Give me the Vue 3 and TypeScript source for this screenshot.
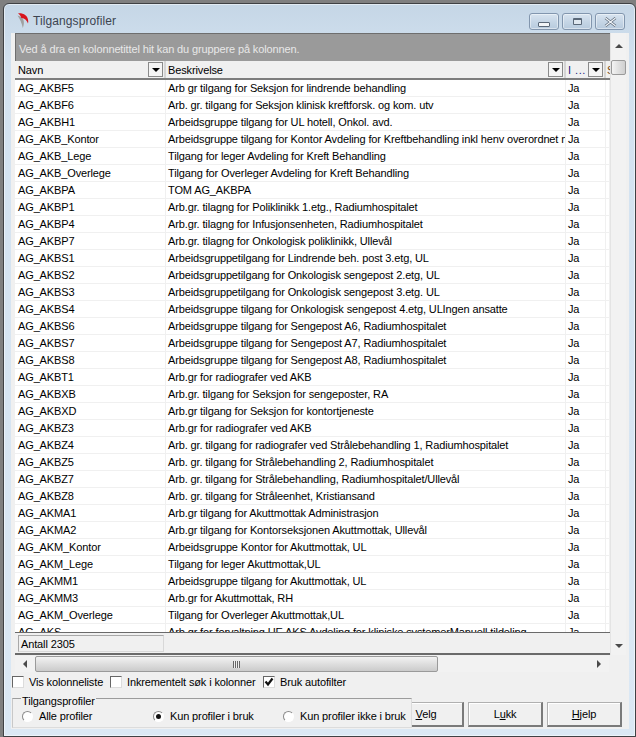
<script setup lang="ts">
const rows: [string, string][] = [
  ["AG_AKBF5", "Arb gr tilgang for Seksjon for lindrende behandling"],
  ["AG_AKBF6", "Arb. gr. tilgang for Seksjon klinisk kreftforsk. og kom. utv"],
  ["AG_AKBH1", "Arbeidsgruppe tilgang for UL hotell, Onkol. avd."],
  ["AG_AKB_Kontor", "Arbeidsgruppe tilgang for Kontor Avdeling for Kreftbehandling inkl henv overordnet n"],
  ["AG_AKB_Lege", "Tilgang for leger Avdeling for Kreft Behandling"],
  ["AG_AKB_Overlege", "Tilgang for Overleger Avdeling for Kreft Behandling"],
  ["AG_AKBPA", "TOM AG_AKBPA"],
  ["AG_AKBP1", "Arb.gr. tilagng for Poliklinikk 1.etg., Radiumhospitalet"],
  ["AG_AKBP4", "Arb.gr. tilagng for Infusjonsenheten, Radiumhospitalet"],
  ["AG_AKBP7", "Arb.gr. tilagng for Onkologisk poliklinikk, Ullevål"],
  ["AG_AKBS1", "Arbeidsgruppetilgang for Lindrende beh. post 3.etg, UL"],
  ["AG_AKBS2", "Arbeidsgruppetilgang for Onkologisk sengepost 2.etg, UL"],
  ["AG_AKBS3", "Arbeidsgruppetilgang for Onkologisk sengepost 3.etg. UL"],
  ["AG_AKBS4", "Arbeidsgruppe tilgang for Onkologisk sengepost 4.etg, ULIngen ansatte"],
  ["AG_AKBS6", "Arbeidsgruppe tilgang for Sengepost A6, Radiumhospitalet"],
  ["AG_AKBS7", "Arbeidsgruppe tilgang for Sengepost A7, Radiumhospitalet"],
  ["AG_AKBS8", "Arbeidsgruppe tilgang for Sengepost A8, Radiumhospitalet"],
  ["AG_AKBT1", "Arb.gr for radiografer ved AKB"],
  ["AG_AKBXB", "Arb.gr. tilgang for Seksjon for sengeposter, RA"],
  ["AG_AKBXD", "Arb.gr tilgang for Seksjon for kontortjeneste"],
  ["AG_AKBZ3", "Arb.gr for radiografer ved AKB"],
  ["AG_AKBZ4", "Arb. gr. tilgang for radiografer ved Strålebehandling 1, Radiumhospitalet"],
  ["AG_AKBZ5", "Arb. gr. tilgang for Strålebehandling 2, Radiumhospitalet"],
  ["AG_AKBZ7", "Arb. gr. tilgang for Strålebehandling, Radiumhospitalet/Ullevål"],
  ["AG_AKBZ8", "Arb. gr. tilgang for Stråleenhet, Kristiansand"],
  ["AG_AKMA1", "Arb.gr tilgang for Akuttmottak Administrasjon"],
  ["AG_AKMA2", "Arb.gr tilgang for Kontorseksjonen Akuttmottak, Ullevål"],
  ["AG_AKM_Kontor", "Arbeidsgruppe Kontor for Akuttmottak, UL"],
  ["AG_AKM_Lege", "Tilgang for leger Akuttmottak,UL"],
  ["AG_AKMM1", "Arbeidsgruppe tilgang for Akuttmottak, UL"],
  ["AG_AKMM3", "Arb.gr for Akuttmottak, RH"],
  ["AG_AKM_Overlege", "Tilgang for Overleger Akuttmottak,UL"],
  ["AG_AKS", "Arb.gr for forvaltning UE AKS Avdeling for kliniske systemerManuell tildeling"],
];
</script>

<template>
  <div class="desktop">
    <div class="window">
      <div class="titlebar">
        <svg class="app-icon" width="12" height="16" viewBox="0 0 12 16">
          <path d="M0.500 2.500C3.500 3 5.500 5 6.500 7C7.200 9 7 12 5.800 15C4.800 10 3 6 0.500 2.500Z" fill="#a0a0a0" />
          <path d="M1 0.300C6.500 -0.300 12.500 3 11 10.500C10 7.500 8 5.300 4.300 5C3.700 3 2.500 1.500 1 0.300Z" fill="#d8141c" />
        </svg>
        <span class="title">Tilgangsprofiler</span>
        <div class="caption-buttons">
          <div class="caption-btn"><span class="glyph-min"></span></div>
          <div class="caption-btn"><span class="glyph-max"></span></div>
          <div class="caption-btn">
            <svg width="13" height="10" viewBox="0 0 13 10">
              <path d="M1.500 1L11.500 9M11.500 1L1.500 9" stroke="#5a6878" stroke-width="2.600" fill="none" />
              <path d="M1.500 1L11.500 9M11.500 1L1.500 9" stroke="#f4f7fa" stroke-width="1.200" fill="none" />
            </svg>
          </div>
        </div>
      </div>

      <div class="client">
        <div class="grid-area">
          <div class="grid">
            <div class="group-panel">Ved å dra en kolonnetittel hit kan du gruppere på kolonnen.</div>
            <div class="head">
              <div class="hcell c1">
                <span>Navn</span>
                <span class="filter"></span>
              </div>
              <div class="hcell c2">
                <span>Beskrivelse</span>
                <span class="filter"></span>
              </div>
              <div class="hcell c3">
                <span class="i-label">I ...</span>
                <span class="filter"></span>
              </div>
              <div class="hcell c4"><span class="cut">S</span></div>
            </div>
            <div class="body">
              <div v-for="r in rows" :key="r[0]" class="row">
                <div class="cell c1">{{ r[0] }}</div>
                <div class="cell c2">{{ r[1] }}</div>
                <div class="cell c3">Ja</div>
                <div class="cell c4"></div>
              </div>
            </div>
            <div class="footer">
              <div class="count">Antall 2305</div>
            </div>
          </div>
          <div class="vscroll">
            <div class="arrow-box"><span class="arrow up"></span></div>
            <div class="vthumb"></div>
            <div class="vtrack"></div>
            <div class="arrow-box low"><span class="arrow down"></span></div>
          </div>
        </div>

        <div class="hscroll">
          <div class="harrow"><span class="arrow left"></span></div>
          <div class="hthumb"><span class="grip"></span></div>
          <div class="htrack"></div>
          <div class="harrow"><span class="arrow right"></span></div>
        </div>

        <div class="options">
          <label class="check opt1"><span class="box"></span>Vis kolonneliste</label>
          <label class="check opt2"><span class="box"></span>Inkrementelt søk i kolonner</label>
          <label class="check">
            <span class="box">
              <svg width="10" height="10" viewBox="0 0 10 10">
                <path d="M1.500 4.500L4 7.500L8.500 1.500" fill="none" stroke="#111" stroke-width="2.200" />
              </svg>
            </span>
            Bruk autofilter
          </label>
        </div>

        <div class="bottom">
          <fieldset class="profiles">
            <legend>Tilgangsprofiler</legend>
            <label class="radio r1"><span class="dot"></span>Alle profiler</label>
            <label class="radio r2"><span class="dot on"></span>Kun profiler i bruk</label>
            <label class="radio"><span class="dot"></span>Kun profiler ikke i bruk</label>
          </fieldset>
          <div class="buttons">
            <button class="btn"><u>V</u>elg</button>
            <button class="btn">L<u>u</u>kk</button>
            <button class="btn"><u>H</u>jelp</button>
          </div>
        </div>
      </div>
    </div>
  </div>
</template>

<style>
html,
body {
  margin: 0;
  background: #7f7f7f;
}
</style>

<style scoped>
.desktop {
  width: 636px;
  height: 737px;
  padding: 3px 0 0 3px;
  box-sizing: border-box;
  background: #7f7f7f;
  overflow: hidden;
  font-family: Tahoma, "Liberation Sans", Arial, sans-serif;
  font-size: 11px;
  letter-spacing: -0.13px;
  color: #000;
}

.window {
  width: 633px;
  height: 734px;
  box-sizing: border-box;
  border: 1px solid #3f4144;
  border-radius: 6px 6px 0 0;
  background: linear-gradient(#c5d6e6, #d3e2f0 60px, #dbe8f4);
  box-shadow: inset 0 0 0 1px rgba(255, 255, 255, 0.5);
  display: flex;
  flex-direction: column;
}

.titlebar {
  height: 29px;
  display: flex;
  align-items: flex-start;
  padding: 9px 10px 0 13px;
  box-sizing: border-box;
  flex: none;
}

.app-icon {
  margin: 0 4px 0 0;
}

.title {
  font-size: 12px;
  letter-spacing: 0.1px;
  color: #3c4450;
  line-height: 17px;
  flex: 1;
}

.caption-buttons {
  display: flex;
  gap: 3px;
}

.caption-btn {
  width: 30px;
  height: 17px;
  box-sizing: border-box;
  border: 1px solid #8296ae;
  border-radius: 3px;
  background: linear-gradient(#d8e4f0, #c6d6e6 50%, #b7cadd);
  box-shadow: inset 0 0 0 1px rgba(255, 255, 255, 0.45);
  display: flex;
  align-items: center;
  justify-content: center;
}

.glyph-min {
  width: 10px;
  height: 3px;
  margin-top: 5px;
  background: #f2f5f8;
  border: 1px solid #5a6878;
  border-radius: 1px;
}

.glyph-max {
  width: 7px;
  height: 4px;
  background: #dfe7ef;
  border: 1px solid #5a6878;
  border-top-width: 2px;
  border-radius: 1px;
}

.client {
  margin: 0 6px 0 7px;
  height: 696px;
  background: #f0f0f0;
  flex: none;
  display: flex;
  flex-direction: column;
  padding-left: 4px;
  box-sizing: border-box;
}

.grid-area {
  display: flex;
  height: 622px;
  padding-right: 2px;
  flex: none;
}

.grid {
  width: 595px;
  flex: none;
  display: flex;
  flex-direction: column;
  overflow: hidden;
  background: #f0f0f0;
}

.group-panel {
  height: 28px;
  flex: none;
  box-sizing: border-box;
  background: #9a9a9a;
  color: #e8e8e8;
  padding: 7px 0 0 3px;
  line-height: 16px;
  border-top: 1px solid #6e6e6e;
  border-left: 1px solid #6e6e6e;
}

.head {
  display: flex;
  flex: none;
  background: #f0f0f0;
  border-bottom: 2px solid #7d7d7d;
  box-sizing: border-box;
  height: 19px;
}

.hcell {
  display: flex;
  align-items: center;
  justify-content: space-between;
  box-sizing: border-box;
  padding: 0 1px 0 3px;
  border-right: 2px solid #d4d4d4;
  background: #f0f0f0;
  white-space: nowrap;
  overflow: hidden;
}

.c1 {
  width: 151px;
  flex: none;
}

.c2 {
  width: 400px;
  flex: none;
}

.c3 {
  width: 40px;
  flex: none;
}

.c4 {
  flex: 1;
}

.filter {
  width: 15px;
  height: 15px;
  box-sizing: border-box;
  border: 1px solid #8a8a8a;
  background: #f4f4f4;
  position: relative;
  flex: none;
}

.filter::after {
  content: "";
  position: absolute;
  left: 3px;
  top: 5px;
  border-left: 4px solid transparent;
  border-right: 4px solid transparent;
  border-top: 4px solid #000;
}

.hcell.c2,
.hcell.c3,
.cell.c2,
.cell.c3 {
  padding-left: 2px;
}

.i-label {
  color: #1c1c80;
  letter-spacing: 0.5px;
}

.hcell.c4 {
  border-right: 0;
  padding-left: 1px;
}

.cut {
  color: #7a4a10;
}

.body {
  flex: 1;
  min-height: 0;
  overflow: hidden;
  background: #fff;
}

.row {
  display: flex;
  height: 17px;
  box-sizing: border-box;
  border-bottom: 1px solid #f0f0f0;
  line-height: 16px;
  white-space: nowrap;
}

.cell {
  padding-left: 3px;
  box-sizing: border-box;
  overflow: hidden;
  border-right: 1px solid #f0f0f0;
  height: 16px;
}

.footer {
  height: 23px;
  flex: none;
  box-sizing: border-box;
  border-top: 1px solid #6a6a6a;
  border-bottom: 2px solid #6a6a6a;
  background: #f0f0f0;
  padding: 2px 0 0 3px;
}

.count {
  width: 146px;
  height: 17px;
  line-height: 16px;
  box-sizing: border-box;
  border: 1px solid #d8d8d8;
  border-top-color: #a8a8a8;
  border-left-color: #a8a8a8;
  padding-left: 2px;
}

.vscroll {
  width: 15px;
  flex: none;
  display: flex;
  flex-direction: column;
  background: #f2f2f2;
  border-left: 1px solid #e4e4e4;
}

.arrow-box {
  height: 26px;
  flex: none;
  display: flex;
  align-items: center;
  justify-content: center;
}

.arrow-box.low {
  padding-top: 8px;
  box-sizing: border-box;
}

.vthumb {
  height: 15px;
  margin-top: 1px;
  flex: none;
  box-sizing: border-box;
  border: 1px solid #9a9a9a;
  border-radius: 2px;
  background: linear-gradient(90deg, #f4f4f4, #e0e0e0 50%, #cfcfcf);
}

.vtrack {
  flex: 1;
}

.arrow {
  width: 0;
  height: 0;
  display: block;
}

.arrow.up {
  border-left: 4px solid transparent;
  border-right: 4px solid transparent;
  border-bottom: 4px solid #4a4a4a;
}

.arrow.down {
  border-left: 4px solid transparent;
  border-right: 4px solid transparent;
  border-top: 4px solid #4a4a4a;
}

.arrow.left {
  border-top: 4px solid transparent;
  border-bottom: 4px solid transparent;
  border-right: 4px solid #4a4a4a;
}

.arrow.right {
  border-top: 4px solid transparent;
  border-bottom: 4px solid transparent;
  border-left: 4px solid #4a4a4a;
}

.hscroll {
  height: 16px;
  margin-top: 1px;
  width: 594px;
  display: flex;
  background: #f2f2f2;
  flex: none;
}

.harrow {
  width: 20px;
  flex: none;
  display: flex;
  align-items: center;
  justify-content: center;
}

.hthumb {
  width: 403px;
  flex: none;
  box-sizing: border-box;
  border: 1px solid #9a9a9a;
  border-radius: 2px;
  background: linear-gradient(#f2f2f2, #dedede 50%, #cbcbcb);
  display: flex;
  align-items: center;
  justify-content: center;
}

.grip {
  width: 7px;
  height: 7px;
  background: repeating-linear-gradient(90deg, #666 0 1px, #eee 1px 2px);
}

.htrack {
  flex: 1;
}

.options {
  display: flex;
  margin-top: 2px;
  height: 16px;
  flex: none;
  align-items: center;
}

.check {
  display: flex;
  align-items: center;
  gap: 5px;
  white-space: nowrap;
}

.box {
  width: 12px;
  height: 12px;
  box-sizing: border-box;
  border: 1px solid #dcdcdc;
  border-top-color: #666;
  border-left-color: #666;
  background: #fff;
  display: flex;
  align-items: center;
  justify-content: center;
  flex: none;
  margin-left: -3px;
}

.box svg {
  flex: none;
}

.opt1 {
  width: 98px;
}

.opt2 {
  width: 153px;
}

.bottom {
  display: flex;
  align-items: flex-end;
  flex: none;
  height: 30px;
  margin-top: 8px;
}

.profiles {
  width: 400px;
  height: 30px;
  box-sizing: border-box;
  margin: 0 0 0 -3px;
  padding: 0 0 0 9px;
  border: 1px solid #dcdcdc;
  border-top-color: #9c9c9c;
  border-left-color: #c8c8c8;
  background: #f0f0f0;
  display: flex;
  align-items: center;
  position: relative;
  z-index: 1;
}

.profiles legend {
  position: absolute;
  left: 8px;
  top: -4px;
  padding: 0 1px;
  background: #f0f0f0;
  line-height: 13px;
}

.radio {
  display: flex;
  align-items: center;
  gap: 6px;
  white-space: nowrap;
  margin-top: 6px;
}

.r1 {
  width: 131px;
}

.r2 {
  width: 130px;
}

.dot {
  width: 11px;
  height: 11px;
  box-sizing: border-box;
  border: 1px solid #fff;
  border-top-color: #8a8a8a;
  border-left-color: #8a8a8a;
  border-radius: 50%;
  background: #fff;
  flex: none;
  position: relative;
}

.dot.on::after {
  content: "";
  position: absolute;
  left: 2px;
  top: 2px;
  width: 5px;
  height: 5px;
  border-radius: 50%;
  background: #111;
}

.buttons {
  display: flex;
  gap: 4px;
  margin: 0 0 1px -23px;
}

.btn {
  width: 75px;
  height: 25px;
  box-sizing: border-box;
  font: inherit;
  letter-spacing: inherit;
  color: #000;
  padding: 0;
  background: #f0f0f0;
  border: 1px solid #b0b0b0;
  border-right: 2px solid #7a7a7a;
  border-bottom: 2px solid #7a7a7a;
  box-shadow: inset 1px 1px 0 #fff;
}
</style>
